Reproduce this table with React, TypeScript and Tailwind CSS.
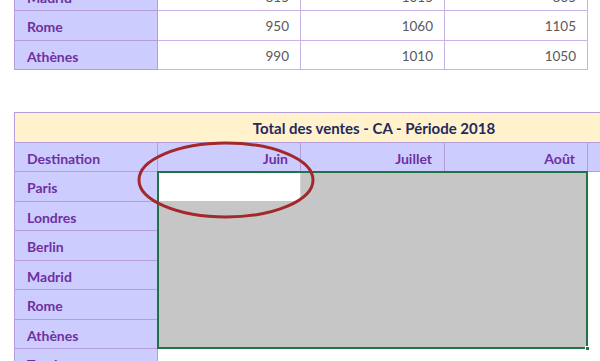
import React from "react";

const topRows = [
  { name: "Madrid", values: ["815", "1015", "865"], h: "h-[29px]" },
  { name: "Rome", values: ["950", "1060", "1105"], h: "h-[30px]" },
  { name: "Athènes", values: ["990", "1010", "1050"], h: "h-[29px]" },
];

const destinations = [
  { name: "Paris", h: "h-[30px]" },
  { name: "Londres", h: "h-[29px]" },
  { name: "Berlin", h: "h-[30px]" },
  { name: "Madrid", h: "h-[29px]" },
  { name: "Rome", h: "h-[30px]" },
  { name: "Athènes", h: "h-[29px]" },
];

const label = "flex items-center pt-[2px] pl-[12px] bg-[#ccccff] text-[#7030a0] font-bold text-[14px] border-r border-b border-[#b39ddb]";
const numCell = "flex items-center justify-end pt-[2px] pr-[11px] bg-white text-[#595959] text-[13.5px] border-r border-b border-[#c9b3e6]";

export default function App() {
  return (
    <div className="w-[600px] h-[361px] overflow-hidden bg-white" style={{ fontFamily: "Lato, 'Liberation Sans', sans-serif" }}>
      {/* Top table, scrolled so that Madrid is cut */}
      <div className="mt-[-18px] ml-[14px] w-[574px] border-l border-[#b39ddb]">
        {topRows.map((r) => (
          <div key={r.name} className={`grid grid-cols-[143px_143px_144px_143px] ${r.h}`}>
            <div className={label}>{r.name}</div>
            {r.values.map((v, i) => (
              <div key={i} className={numCell}>{v}</div>
            ))}
          </div>
        ))}
      </div>

      {/* Bottom table */}
      <div className="relative mt-[42px] ml-[14px] w-[800px] border-l border-[#b39ddb]">
        <div className="h-[31px] pt-[2px] border-t border-b border-[#b39ddb] bg-[#fff2cc] flex items-center justify-center w-[718px] text-[15px] font-bold text-[#1f2a60]">
          Total des ventes - CA - Période 2018
        </div>
        <div className="grid grid-cols-[143px_143px_144px_143px_177px] h-[29px]">
          <div className={label}>Destination</div>
          <div className={`${label} justify-end pr-[12px]`}>Juin</div>
          <div className={`${label} justify-end pr-[12px]`}>Juillet</div>
          <div className={`${label} justify-end pr-[12px]`}>Août</div>
          <div className={label}></div>
        </div>
        <div className="flex">
          <div className="w-[143px] flex flex-col">
            {destinations.map((d) => (
              <div key={d.name} className={`${label} ${d.h}`}>{d.name}</div>
            ))}
            <div className={`${label} h-[29px] items-end pb-[2px]`}>Total</div>
          </div>
          {/* Selected range */}
          <div className="relative w-[431px] h-[178px] ml-[-1px] mt-[-1px] border-2 border-[#217346] bg-[#c6c6c6]">
            <div className="w-[142px] h-[28px] bg-white border-r border-[#d4d4d4]"></div>
            <div className="absolute right-[-4px] bottom-[-4px] w-[5px] h-[5px] bg-[#217346] border border-white"></div>
          </div>
        </div>
        {/* Red highlight ellipse */}
        <svg className="absolute left-[109px] top-[14px] pointer-events-none" width="200" height="100" viewBox="0 0 200 100">
          <ellipse cx="102" cy="54" rx="87" ry="37" fill="none" stroke="#a2282b" strokeWidth="3" />
        </svg>
      </div>
    </div>
  );
}
